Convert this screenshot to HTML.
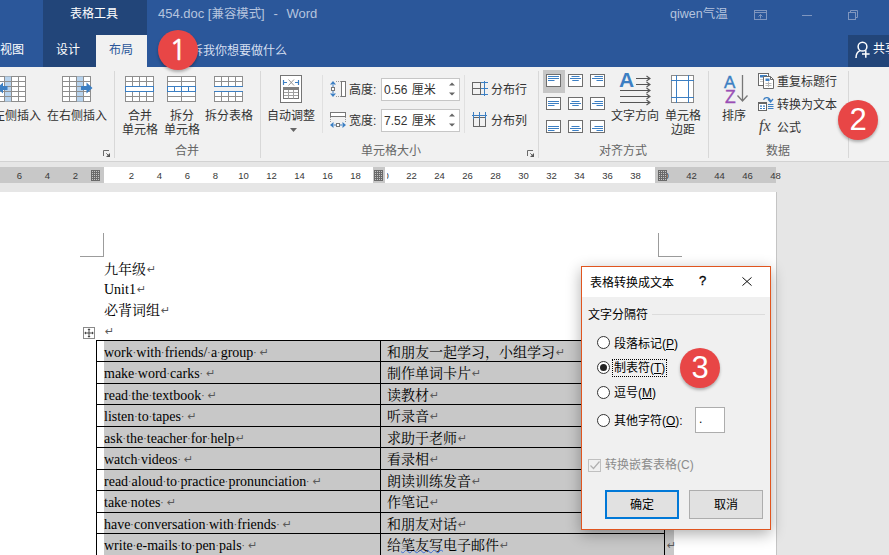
<!DOCTYPE html>
<html lang="zh-CN"><head><meta charset="utf-8"><title>Word</title>
<style>
*{margin:0;padding:0;box-sizing:border-box}
html,body{width:889px;height:555px;overflow:hidden;background:#e6e6e6}
body{position:relative;font-family:"Liberation Sans","Noto Sans CJK SC",sans-serif;font-size:12px;color:#333;font-weight:400}
.a{position:absolute;white-space:nowrap}
.t{position:absolute;white-space:nowrap;line-height:16px;height:16px}
.c{text-align:center}
svg{position:absolute;overflow:visible}
#title{left:0;top:0;width:889px;height:67px;background:#2b579a}
#ctx{left:43px;top:0;width:104px;height:67px;background:#224579}
#tab{left:96px;top:35px;width:51px;height:32px;background:#f1f1f1}
#share{left:848px;top:35px;width:41px;height:32px;background:#224579}
#ribbon{left:0;top:67px;width:889px;height:94px;background:#f1f1f1}
#ribline{left:0;top:161px;width:889px;height:1px;background:#d2d2d2}
.sep{position:absolute;width:1px;background:#d8d8d8}
.gl{color:#666}
.inp{position:absolute;background:#fff;border:1px solid #c6c6c6}
.red{position:absolute;width:40px;height:40px;border-radius:50%;background:#e84646;color:#fff;font-size:31px;line-height:39px;text-align:center;font-weight:400;box-shadow:0 2px 3px rgba(0,0,0,.28);font-family:"Liberation Sans",sans-serif}
#page{left:0;top:192px;width:777px;height:363px;background:#fff;border-right:1px solid #c4c4c4}
.doc{font-family:"Liberation Serif","Noto Serif CJK SC",serif;font-size:14px;font-weight:400;color:#000;line-height:20px;height:20px;position:absolute;white-space:nowrap}
.pm{color:#5a5a5a;font-size:11px;line-height:10px;font-family:"DejaVu Sans",sans-serif;position:relative;top:-1px;margin-left:1px}
.pm2{margin-left:3px}
.sp{display:inline-block;width:3.5px;text-align:center;font-size:10px;color:#333;position:relative;top:-1px;text-indent:-0.3px}
.wv{text-decoration:underline wavy #3f6fd6;text-decoration-thickness:1px;text-underline-offset:-1px}
.hl{position:absolute;border-top:1px solid #000;height:0}
.rn{position:absolute;top:168px;height:16px;line-height:16px;font-size:9.5px;color:#383838;width:28px;text-align:center;font-family:"Liberation Sans",sans-serif}
#dlg{left:581px;top:266px;width:190px;height:264px;background:#f0f0f0;border:1px solid #e0551f;box-shadow:0 4px 14px rgba(0,0,0,.32)}
#dlgt{left:582px;top:267px;width:188px;height:30px;background:#fff}
.dt{color:#000;font-weight:400}
.radio{position:absolute;width:13px;height:13px;border-radius:50%;border:1px solid #333;background:#fff}
.btn{position:absolute;font-weight:400;height:29px;background:#e1e1e1;color:#000;text-align:center;line-height:28px}
</style></head>
<body>
<div class="a" id="title"></div><div class="a" id="ctx"></div><div class="a" id="tab"></div><div class="a" id="share"></div>
<div class="t" style="left:70px;top:6px;color:#fff">表格工具</div>
<div class="t" style="left:158px;top:6px;color:#b5c4de;font-size:13px">454.doc [<span style="font-size:12.4px">兼容模式</span>]&nbsp; <span style="margin:0 1.5px">-</span>&nbsp; Word</div>
<div class="t" style="left:670px;top:6px;color:#b5c4de;font-size:12.5px">qiwen气温</div>
<div class="t" style="left:0px;top:42px;color:#fff">视图</div>
<div class="t" style="left:56px;top:42px;color:#fff">设计</div>
<div class="t" style="left:109px;top:42px;color:#2b579a">布局</div>
<div class="t" style="left:179px;top:43px;color:#d5dff0">告诉我你想要做什么</div>
<div class="t" style="left:873px;top:41px;color:#fff">共享</div>
<svg style="left:754px;top:10px" width="13" height="10" viewBox="0 0 13 10"><rect x="0.5" y="0.5" width="12" height="9" fill="none" stroke="#7f96bf"/><line x1="0" y1="2.5" x2="13" y2="2.5" stroke="#7f96bf"/><path d="M6.5 8.5V4.5M4.500 6.500l2-2 2 2" fill="none" stroke="#7f96bf"/></svg>
<div class="a" style="left:802px;top:15px;width:10px;height:1px;background:#7f96bf"></div>
<svg style="left:848px;top:10px" width="10" height="10" viewBox="0 0 10 10"><rect x="0.5" y="2.5" width="7" height="7" fill="none" stroke="#7f96bf"/><path d="M2.5 2.5V0.5H9.5V7.5H7.5" fill="none" stroke="#7f96bf"/></svg>
<svg style="left:855px;top:41px" width="16" height="18" viewBox="0 0 16 18"><circle cx="7.500" cy="5.700" r="4.400" fill="none" stroke="#fff" stroke-width="1.500"/><path d="M1 17c0-3.800 1.500-6.300 4-7.400" fill="none" stroke="#fff" stroke-width="1.500"/><path d="M10.800 9.300v7.500M7 13h7.600" stroke="#fff" stroke-width="1.500"/></svg>
<div class="a" id="ribbon"></div><div class="a" id="ribline"></div>
<div class="sep" style="left:114px;top:71px;height:87px"></div>
<div class="sep" style="left:260px;top:71px;height:87px"></div>
<div class="sep" style="left:538px;top:71px;height:87px"></div>
<div class="sep" style="left:708px;top:71px;height:87px"></div>
<div class="sep" style="left:848px;top:71px;height:87px"></div>
<div class="sep" style="left:322px;top:75px;height:58px;background:#e0e0e0"></div>
<div class="sep" style="left:464px;top:75px;height:58px;background:#e0e0e0"></div>
<svg style="left:-3px;top:76px" width="29" height="26" viewBox="0 0 29 26"><rect x="0.5" y="0.5" width="28" height="25" fill="#fff" stroke="#8e8e8e"/><rect x="7.5" y="0.5" width="7" height="25" fill="#b7d3ee"/><line x1="7.5" y1="0" x2="7.5" y2="26" stroke="#8e8e8e"/><line x1="14.5" y1="0" x2="14.5" y2="26" stroke="#8e8e8e"/><line x1="21.5" y1="0" x2="21.5" y2="26" stroke="#8e8e8e"/><line x1="0" y1="5.5" x2="29" y2="5.5" stroke="#8e8e8e"/><line x1="0" y1="10.5" x2="29" y2="10.5" stroke="#8e8e8e"/><line x1="0" y1="15.5" x2="29" y2="15.5" stroke="#8e8e8e"/><line x1="0" y1="20.5" x2="29" y2="20.5" stroke="#8e8e8e"/></svg>
<svg style="left:-3px;top:82px" width="11" height="12" viewBox="0 0 11 12"><path d="M0 6L6 0.5V4H10.5V8H6V11.5Z" fill="#3c7fc3"/></svg>
<svg style="left:62px;top:76px" width="29" height="26" viewBox="0 0 29 26"><rect x="0.5" y="0.5" width="28" height="25" fill="#fff" stroke="#8e8e8e"/><rect x="14.5" y="0.5" width="7" height="25" fill="#b7d3ee"/><line x1="7.5" y1="0" x2="7.5" y2="26" stroke="#8e8e8e"/><line x1="14.5" y1="0" x2="14.5" y2="26" stroke="#8e8e8e"/><line x1="21.5" y1="0" x2="21.5" y2="26" stroke="#8e8e8e"/><line x1="0" y1="5.5" x2="29" y2="5.5" stroke="#8e8e8e"/><line x1="0" y1="10.5" x2="29" y2="10.5" stroke="#8e8e8e"/><line x1="0" y1="15.5" x2="29" y2="15.5" stroke="#8e8e8e"/><line x1="0" y1="20.5" x2="29" y2="20.5" stroke="#8e8e8e"/></svg>
<svg style="left:81px;top:82px" width="12" height="12" viewBox="0 0 12 12"><path d="M11.5 6L5.5 0.5V4H0V8H5.5V11.5Z" fill="#3c7fc3"/></svg>
<div class="t" style="left:-19px;top:108px">在左侧插入</div>
<div class="t" style="left:47px;top:108px">在右侧插入</div>
<svg style="left:103px;top:150px" width="7" height="7" viewBox="0 0 7 7"><path d="M0.500 6V0.500H6" fill="none" stroke="#6a6a6a"/><path d="M7 3v4H3z" fill="#555"/><path d="M3.300 3.300L5.500 5.500" stroke="#666"/></svg>
<svg style="left:125px;top:76px" width="29" height="26" viewBox="0 0 29 26"><rect x="0.5" y="0.5" width="28" height="25" fill="#fff" stroke="#8e8e8e"/><line x1="7.5" y1="0" x2="7.5" y2="26" stroke="#8e8e8e"/><line x1="14.5" y1="0" x2="14.5" y2="26" stroke="#8e8e8e"/><line x1="21.5" y1="0" x2="21.5" y2="26" stroke="#8e8e8e"/><line x1="0" y1="5.5" x2="29" y2="5.5" stroke="#8e8e8e"/><line x1="0" y1="10.5" x2="29" y2="10.5" stroke="#8e8e8e"/><line x1="0" y1="15.5" x2="29" y2="15.5" stroke="#8e8e8e"/><line x1="0" y1="20.5" x2="29" y2="20.5" stroke="#8e8e8e"/></svg><svg style="left:125px;top:76px" width="29" height="26"><rect x="0.5" y="10.5" width="28" height="5" fill="#fff" stroke="#3c7fc3"/></svg>
<div class="t c" style="left:110px;width:60px;top:108px">合并</div><div class="t c" style="left:110px;width:60px;top:122px">单元格</div>
<svg style="left:167px;top:76px" width="29" height="26" viewBox="0 0 29 26"><rect x="0.5" y="0.5" width="28" height="25" fill="#fff" stroke="#8e8e8e"/><line x1="14.5" y1="0" x2="14.5" y2="26" stroke="#8e8e8e"/><line x1="0" y1="5.5" x2="29" y2="5.5" stroke="#8e8e8e"/><line x1="0" y1="10.5" x2="29" y2="10.5" stroke="#8e8e8e"/><line x1="0" y1="15.5" x2="29" y2="15.5" stroke="#8e8e8e"/><line x1="0" y1="20.5" x2="29" y2="20.5" stroke="#8e8e8e"/></svg><svg style="left:167px;top:76px" width="29" height="26"><rect x="0.5" y="10.5" width="28" height="5" fill="#fff" stroke="#3c7fc3"/><path d="M7.5 10.5v5M14.5 10.5v5M21.5 10.5v5" stroke="#3c7fc3"/></svg>
<div class="t c" style="left:152px;width:60px;top:108px">拆分</div><div class="t c" style="left:152px;width:60px;top:122px">单元格</div>
<svg style="left:214px;top:76px" width="29" height="11" viewBox="0 0 29 11"><rect x="0.5" y="0.5" width="28" height="10" fill="#fff" stroke="#8e8e8e"/><line x1="7.5" y1="0" x2="7.5" y2="11" stroke="#8e8e8e"/><line x1="14.5" y1="0" x2="14.5" y2="11" stroke="#8e8e8e"/><line x1="21.5" y1="0" x2="21.5" y2="11" stroke="#8e8e8e"/><line x1="0" y1="5.5" x2="29" y2="5.5" stroke="#8e8e8e"/></svg><svg style="left:214px;top:91px" width="29" height="11" viewBox="0 0 29 11"><rect x="0.5" y="0.5" width="28" height="10" fill="#fff" stroke="#8e8e8e"/><line x1="7.5" y1="0" x2="7.5" y2="11" stroke="#8e8e8e"/><line x1="14.5" y1="0" x2="14.5" y2="11" stroke="#8e8e8e"/><line x1="21.5" y1="0" x2="21.5" y2="11" stroke="#8e8e8e"/><line x1="0" y1="5.5" x2="29" y2="5.5" stroke="#8e8e8e"/></svg>
<div class="a" style="left:214px;top:86px;width:29px;height:1px;background:#3c7fc3"></div><div class="a" style="left:214px;top:91px;width:29px;height:1px;background:#3c7fc3"></div>
<div class="t" style="left:205px;top:108px">拆分表格</div>
<div class="t gl" style="left:175px;top:143px">合并</div>
<svg style="left:280px;top:75px" width="22" height="28" viewBox="0 0 22 28"><rect x="0.5" y="0.5" width="21" height="27" fill="#fff" stroke="#757575"/>
<path d="M3.5 5v5M18.5 5v5M3.5 7.5h3.5M15 7.5h3.5" stroke="#3c7fc3" stroke-width="1.200" fill="none"/><path d="M8.500 4.500l5.500 6M14 4.500l-5.500 6" stroke="#8a8a8a" stroke-width=".9"/>
<rect x="3.5" y="12.5" width="15" height="11" fill="#fff" stroke="#777"/><rect x="3" y="12" width="16" height="3" fill="#808080"/>
<path d="M8.5 15v8.500M13.5 15v8.500M4 17.500h14M4 20.500h14" stroke="#a0a0a0" fill="none"/></svg>
<div class="t" style="left:267px;top:108px">自动调整</div>
<svg style="left:290px;top:128px" width="7" height="4" viewBox="0 0 7 4"><path d="M0 0h7L3.5 4z" fill="#666"/></svg>
<svg style="left:330px;top:81px" width="17" height="16" viewBox="0 0 17 16"><rect x="11.5" y="0.5" width="4" height="15" fill="#fff" stroke="#777"/>
<path d="M3 0L0 3.5H6Z M3 16L0 12.5H6Z" fill="#3c7fc3"/><rect x="1.5" y="6.5" width="3" height="3" fill="#fff" stroke="#777"/><path d="M3 4v2M3 10v2" stroke="#3c7fc3"/>
<path d="M6 0.5h5M6 15.5h5" stroke="#999" stroke-dasharray="1 1"/></svg>
<svg style="left:330px;top:112px" width="17" height="16" viewBox="0 0 17 16"><rect x="0.5" y="0.5" width="15" height="4" fill="#fff" stroke="#777"/>
<path d="M0 13L3.5 10V16Z M16 13L12.5 10V16Z" fill="#3c7fc3"/><rect x="6.5" y="11.5" width="3" height="3" fill="#fff" stroke="#777"/><path d="M4 13h2M10 13h2" stroke="#3c7fc3"/>
<path d="M0.5 5v5M15.5 5v5" stroke="#999" stroke-dasharray="1 1"/></svg>
<div class="t" style="left:349px;top:82px">高度:</div><div class="t" style="left:349px;top:113px">宽度:</div>
<div class="inp" style="left:381px;top:78px;width:79px;height:23px"></div><div class="inp" style="left:381px;top:109px;width:79px;height:23px"></div>
<div class="t" style="left:384px;top:82px;word-spacing:1px">0.56 厘米</div><div class="t" style="left:384px;top:113px;word-spacing:1px">7.52 厘米</div>
<svg style="left:449px;top:82px" width="6" height="14" viewBox="0 0 6 14"><path d="M0 3.5L3 0.5L6 3.5Z M0 10.5L3 13.5L6 10.5Z" fill="#666"/></svg>
<svg style="left:449px;top:113px" width="6" height="14" viewBox="0 0 6 14"><path d="M0 3.5L3 0.5L6 3.5Z M0 10.5L3 13.5L6 10.5Z" fill="#666"/></svg>
<svg style="left:472px;top:81px" width="16" height="15" viewBox="0 0 16 15"><rect x="0.5" y="1.5" width="8" height="12" fill="none" stroke="#666"/><path d="M0 7.5h9" stroke="#666"/><path d="M12.5 0v15M9 1.500h7M9 7.500h7M9 13.500h7" stroke="#3c7fc3" fill="none"/></svg>
<svg style="left:472px;top:112px" width="15" height="15" viewBox="0 0 15 15"><rect x="1.500" y="5.500" width="12" height="9" fill="none" stroke="#666"/><path d="M7.500 5v10" stroke="#666"/><path d="M0 3.500h15M1.500 0v7M7.500 0v7M13.500 0v7" stroke="#3c7fc3" fill="none"/></svg>
<div class="t" style="left:491px;top:82px">分布行</div><div class="t" style="left:491px;top:113px">分布列</div>
<div class="t gl" style="left:361px;top:143px">单元格大小</div>
<svg style="left:527px;top:150px" width="7" height="7" viewBox="0 0 7 7"><path d="M0.500 6V0.500H6" fill="none" stroke="#6a6a6a"/><path d="M7 3v4H3z" fill="#555"/><path d="M3.300 3.300L5.500 5.500" stroke="#666"/></svg>
<div class="a" style="left:543px;top:70px;width:22px;height:23px;background:#c6c6c6"></div>
<svg style="left:546px;top:74px" width="15" height="13" viewBox="0 0 15 13"><rect x="0.500" y="0.500" width="14" height="12" fill="#fff" stroke="#6e6e6e"/><line x1="2" y1="2.5" x2="13" y2="2.5" stroke="#3c7fc3"/><line x1="2" y1="4.5" x2="13" y2="4.5" stroke="#3c7fc3"/><line x1="2" y1="6.5" x2="8.5" y2="6.5" stroke="#3c7fc3"/></svg>
<svg style="left:568px;top:74px" width="15" height="13" viewBox="0 0 15 13"><rect x="0.500" y="0.500" width="14" height="12" fill="#fff" stroke="#6e6e6e"/><line x1="3.5" y1="2.5" x2="11.5" y2="2.5" stroke="#3c7fc3"/><line x1="2.0" y1="4.5" x2="13.0" y2="4.5" stroke="#3c7fc3"/><line x1="4.25" y1="6.5" x2="10.75" y2="6.5" stroke="#3c7fc3"/></svg>
<svg style="left:590px;top:74px" width="15" height="13" viewBox="0 0 15 13"><rect x="0.500" y="0.500" width="14" height="12" fill="#fff" stroke="#6e6e6e"/><line x1="4.5" y1="2.5" x2="13.0" y2="2.5" stroke="#3c7fc3"/><line x1="2" y1="4.5" x2="13" y2="4.5" stroke="#3c7fc3"/><line x1="6.5" y1="6.5" x2="13.0" y2="6.5" stroke="#3c7fc3"/></svg>
<svg style="left:546px;top:97px" width="15" height="13" viewBox="0 0 15 13"><rect x="0.500" y="0.500" width="14" height="12" fill="#fff" stroke="#6e6e6e"/><line x1="2" y1="4.5" x2="13" y2="4.5" stroke="#3c7fc3"/><line x1="2" y1="6.5" x2="13" y2="6.5" stroke="#3c7fc3"/><line x1="2" y1="8.5" x2="8.5" y2="8.5" stroke="#3c7fc3"/></svg>
<svg style="left:568px;top:97px" width="15" height="13" viewBox="0 0 15 13"><rect x="0.500" y="0.500" width="14" height="12" fill="#fff" stroke="#6e6e6e"/><line x1="3.5" y1="4.5" x2="11.5" y2="4.5" stroke="#3c7fc3"/><line x1="2.0" y1="6.5" x2="13.0" y2="6.5" stroke="#3c7fc3"/><line x1="4.25" y1="8.5" x2="10.75" y2="8.5" stroke="#3c7fc3"/></svg>
<svg style="left:590px;top:97px" width="15" height="13" viewBox="0 0 15 13"><rect x="0.500" y="0.500" width="14" height="12" fill="#fff" stroke="#6e6e6e"/><line x1="4.5" y1="4.5" x2="13.0" y2="4.5" stroke="#3c7fc3"/><line x1="2" y1="6.5" x2="13" y2="6.5" stroke="#3c7fc3"/><line x1="6.5" y1="8.5" x2="13.0" y2="8.5" stroke="#3c7fc3"/></svg>
<svg style="left:546px;top:120px" width="15" height="13" viewBox="0 0 15 13"><rect x="0.500" y="0.500" width="14" height="12" fill="#fff" stroke="#6e6e6e"/><line x1="2" y1="6.5" x2="13" y2="6.5" stroke="#3c7fc3"/><line x1="2" y1="8.5" x2="13" y2="8.5" stroke="#3c7fc3"/><line x1="2" y1="10.5" x2="8.5" y2="10.5" stroke="#3c7fc3"/></svg>
<svg style="left:568px;top:120px" width="15" height="13" viewBox="0 0 15 13"><rect x="0.500" y="0.500" width="14" height="12" fill="#fff" stroke="#6e6e6e"/><line x1="3.5" y1="6.5" x2="11.5" y2="6.5" stroke="#3c7fc3"/><line x1="2.0" y1="8.5" x2="13.0" y2="8.5" stroke="#3c7fc3"/><line x1="4.25" y1="10.5" x2="10.75" y2="10.5" stroke="#3c7fc3"/></svg>
<svg style="left:590px;top:120px" width="15" height="13" viewBox="0 0 15 13"><rect x="0.500" y="0.500" width="14" height="12" fill="#fff" stroke="#6e6e6e"/><line x1="4.5" y1="6.5" x2="13.0" y2="6.5" stroke="#3c7fc3"/><line x1="2" y1="8.5" x2="13" y2="8.5" stroke="#3c7fc3"/><line x1="6.5" y1="10.5" x2="13.0" y2="10.5" stroke="#3c7fc3"/></svg>
<div class="a" style="left:619px;top:69px;font:bold 21px/21px 'Liberation Sans',sans-serif;color:#3c7fc3">A</div>
<svg style="left:619px;top:74px" width="32" height="32" viewBox="0 0 32 32"><path d="M17 4.5H31M27.5 2.0l3.500 2.500l-3.500 2.500" fill="none" stroke="#555" stroke-width="1.100"/><path d="M17 10.5H31M27.5 8.0l3.500 2.500l-3.500 2.500" fill="none" stroke="#555" stroke-width="1.100"/><path d="M1 16.5H31M27.5 14.0l3.500 2.500l-3.500 2.500" fill="none" stroke="#555" stroke-width="1.100"/><path d="M1 22.5H31M27.5 20.0l3.500 2.500l-3.500 2.500" fill="none" stroke="#555" stroke-width="1.100"/><path d="M1 28.5H31M27.5 26.0l3.500 2.500l-3.500 2.500" fill="none" stroke="#555" stroke-width="1.100"/></svg>
<div class="t" style="left:611px;top:108px">文字方向</div>
<svg style="left:671px;top:75px" width="23" height="28" viewBox="0 0 23 28"><rect x="0.500" y="0.500" width="22" height="27" fill="#fff" stroke="#8a8a8a"/><path d="M5.500 0v28M17.500 0v28M0 5.500h23M0 22.500h23" stroke="#3c7fc3" fill="none"/></svg>
<div class="t c" style="left:653px;width:60px;top:108px">单元格</div><div class="t c" style="left:653px;width:60px;top:122px">边距</div>
<div class="t gl" style="left:599px;top:143px">对齐方式</div>
<div class="a" style="left:724px;top:74px;font:17px/17px 'Liberation Sans',sans-serif;-webkit-text-stroke:.4px #3c7fc3;color:#3c7fc3">A</div>
<div class="a" style="left:725px;top:89px;font:17.5px/17px 'Liberation Sans',sans-serif;-webkit-text-stroke:.4px #9a4fb5;color:#9a4fb5">Z</div>
<svg style="left:737px;top:75px" width="11" height="27" viewBox="0 0 11 27"><path d="M5.500 0v26M0.500 20.500l5 5.500l5-5.500" fill="none" stroke="#777" stroke-width="1.300"/></svg>
<div class="t" style="left:722px;top:108px">排序</div>
<svg style="left:758px;top:73px" width="16" height="16" viewBox="0 0 16 16"><rect x="0.5" y="0.5" width="10" height="12" fill="#fff" stroke="#6a6a6a"/><rect x="2" y="2" width="7" height="2.500" fill="#3c7fc3"/><path d="M2 6.500h7M2 8.500h7M5.500 5v5" stroke="#c8c8c8" fill="none"/>
<path d="M5.500 3.500h7l3 3v9h-10z" fill="#fff" stroke="#6a6a6a"/><path d="M12.500 3.500v3h3" fill="none" stroke="#6a6a6a"/><rect x="7.500" y="5.500" width="4" height="2.500" fill="#3c7fc3"/><path d="M7.500 10.500h6M7.500 12.500h6M10.500 8.500v5.500" stroke="#b8b8b8" fill="none"/></svg>
<svg style="left:758px;top:96px" width="16" height="15" viewBox="0 0 16 15"><rect x="0.500" y="6.500" width="8" height="8" fill="#fff" stroke="#666"/><rect x="0" y="6" width="9" height="2" fill="#666"/><path d="M2 10.200h2M5 10.200h2M2 12.500h2M5 12.500h2" stroke="#3c7fc3" stroke-width="1.200"/><path d="M10 8.500h5.500M10 10.500h5.500M10 12.500h5.500" stroke="#3c7fc3"/><path d="M5.500 3.800C7 0.800 11 0.800 12.500 5M10 3.300l2.600 2.700l2.400-3" fill="none" stroke="#3c7fc3" stroke-width="1.300"/></svg>
<div class="a" style="left:759px;top:117px;font:italic 16px/18px 'Liberation Serif',serif;color:#444">fx</div>
<div class="t" style="left:777px;top:74px">重复标题行</div><div class="t" style="left:777px;top:97px">转换为文本</div><div class="t" style="left:777px;top:120px">公式</div>
<div class="t gl" style="left:766px;top:143px">数据</div>
<div class="a" style="left:0;top:167px;width:776px;height:16px;background:#c8c8c8"></div>
<div class="a" style="left:104px;top:167px;width:551px;height:16px;background:#fff"></div>
<div class="rn" style="left:5.5px">6</div>
<div class="rn" style="left:33.5px">4</div>
<div class="rn" style="left:61.5px">2</div>
<div class="rn" style="left:117.5px">2</div>
<div class="rn" style="left:145.5px">4</div>
<div class="rn" style="left:173.5px">6</div>
<div class="rn" style="left:201.5px">8</div>
<div class="rn" style="left:229.5px">10</div>
<div class="rn" style="left:257.5px">12</div>
<div class="rn" style="left:285.5px">14</div>
<div class="rn" style="left:313.5px">16</div>
<div class="rn" style="left:341.5px">18</div>
<div class="rn" style="left:369.5px">20</div>
<div class="rn" style="left:397.5px">22</div>
<div class="rn" style="left:425.5px">24</div>
<div class="rn" style="left:453.5px">26</div>
<div class="rn" style="left:481.5px">28</div>
<div class="rn" style="left:509.5px">30</div>
<div class="rn" style="left:537.5px">32</div>
<div class="rn" style="left:565.5px">34</div>
<div class="rn" style="left:593.5px">36</div>
<div class="rn" style="left:621.5px">38</div>
<div class="rn" style="left:649.5px">40</div>
<div class="rn" style="left:677.5px">42</div>
<div class="rn" style="left:705.5px">44</div>
<div class="rn" style="left:733.5px">46</div>
<div class="rn" style="left:761.5px">48</div>
<div class="a" style="left:373px;top:167px;width:12px;height:16px;background:#c8c8c8"></div><div class="a" style="left:385px;top:167px;width:2px;height:16px;background:#fff"></div>
<svg style="left:91px;top:170px" width="9" height="11" viewBox="0 0 9 11"><rect width="9" height="11" fill="#c4c4c4"/><line x1="0.5" y1="0" x2="0.5" y2="11" stroke="#6a6a6a" stroke-width="1"/><line x1="2.5" y1="0" x2="2.5" y2="11" stroke="#6a6a6a" stroke-width="1"/><line x1="4.5" y1="0" x2="4.5" y2="11" stroke="#6a6a6a" stroke-width="1"/><line x1="6.5" y1="0" x2="6.5" y2="11" stroke="#6a6a6a" stroke-width="1"/><line x1="8.5" y1="0" x2="8.5" y2="11" stroke="#6a6a6a" stroke-width="1"/><line x1="0" y1="0.5" x2="9" y2="0.5" stroke="#6a6a6a" stroke-width="1"/><line x1="0" y1="2.5" x2="9" y2="2.5" stroke="#6a6a6a" stroke-width="1"/><line x1="0" y1="4.5" x2="9" y2="4.5" stroke="#6a6a6a" stroke-width="1"/><line x1="0" y1="6.5" x2="9" y2="6.5" stroke="#6a6a6a" stroke-width="1"/><line x1="0" y1="8.5" x2="9" y2="8.5" stroke="#6a6a6a" stroke-width="1"/><line x1="0" y1="10.5" x2="9" y2="10.5" stroke="#6a6a6a" stroke-width="1"/></svg><svg style="left:374px;top:170px" width="9" height="11" viewBox="0 0 9 11"><rect width="9" height="11" fill="#c4c4c4"/><line x1="0.5" y1="0" x2="0.5" y2="11" stroke="#6a6a6a" stroke-width="1"/><line x1="2.5" y1="0" x2="2.5" y2="11" stroke="#6a6a6a" stroke-width="1"/><line x1="4.5" y1="0" x2="4.5" y2="11" stroke="#6a6a6a" stroke-width="1"/><line x1="6.5" y1="0" x2="6.5" y2="11" stroke="#6a6a6a" stroke-width="1"/><line x1="8.5" y1="0" x2="8.5" y2="11" stroke="#6a6a6a" stroke-width="1"/><line x1="0" y1="0.5" x2="9" y2="0.5" stroke="#6a6a6a" stroke-width="1"/><line x1="0" y1="2.5" x2="9" y2="2.5" stroke="#6a6a6a" stroke-width="1"/><line x1="0" y1="4.5" x2="9" y2="4.5" stroke="#6a6a6a" stroke-width="1"/><line x1="0" y1="6.5" x2="9" y2="6.5" stroke="#6a6a6a" stroke-width="1"/><line x1="0" y1="8.5" x2="9" y2="8.5" stroke="#6a6a6a" stroke-width="1"/><line x1="0" y1="10.5" x2="9" y2="10.5" stroke="#6a6a6a" stroke-width="1"/></svg><svg style="left:658px;top:170px" width="9" height="11" viewBox="0 0 9 11"><rect width="9" height="11" fill="#c4c4c4"/><line x1="0.5" y1="0" x2="0.5" y2="11" stroke="#6a6a6a" stroke-width="1"/><line x1="2.5" y1="0" x2="2.5" y2="11" stroke="#6a6a6a" stroke-width="1"/><line x1="4.5" y1="0" x2="4.5" y2="11" stroke="#6a6a6a" stroke-width="1"/><line x1="6.5" y1="0" x2="6.5" y2="11" stroke="#6a6a6a" stroke-width="1"/><line x1="8.5" y1="0" x2="8.5" y2="11" stroke="#6a6a6a" stroke-width="1"/><line x1="0" y1="0.5" x2="9" y2="0.5" stroke="#6a6a6a" stroke-width="1"/><line x1="0" y1="2.5" x2="9" y2="2.5" stroke="#6a6a6a" stroke-width="1"/><line x1="0" y1="4.5" x2="9" y2="4.5" stroke="#6a6a6a" stroke-width="1"/><line x1="0" y1="6.5" x2="9" y2="6.5" stroke="#6a6a6a" stroke-width="1"/><line x1="0" y1="8.5" x2="9" y2="8.5" stroke="#6a6a6a" stroke-width="1"/><line x1="0" y1="10.5" x2="9" y2="10.5" stroke="#6a6a6a" stroke-width="1"/></svg>
<div class="a" id="page"></div>
<div class="a" style="left:103px;top:233px;width:1px;height:24px;background:#9c9c9c"></div><div class="a" style="left:80px;top:256px;width:24px;height:1px;background:#9c9c9c"></div>
<div class="a" style="left:658px;top:233px;width:1px;height:24px;background:#9c9c9c"></div><div class="a" style="left:658px;top:256px;width:24px;height:1px;background:#9c9c9c"></div>
<div class="doc" style="left:104px;top:260px">九年级<span class="pm">↵</span></div>
<div class="doc" style="left:104px;top:280px">Unit1<span class="pm">↵</span></div>
<div class="doc" style="left:104px;top:301px">必背词组<span class="pm">↵</span></div>
<div class="doc" style="left:104px;top:322px"><span class="pm">↵</span></div>
<svg style="left:83px;top:327px" width="12" height="12" viewBox="0 0 12 12"><rect x="0.500" y="0.500" width="11" height="11" fill="#fff" stroke="#8a8a8a"/><path d="M6 2v8M2 6h8" stroke="#444"/><path d="M6 1.200L4.500 3h3zM6 10.800L4.500 9h3zM1.200 6L3 4.500v3zM10.800 6L9 4.500v3z" fill="#444"/></svg>
<div class="a" style="left:104px;top:341px;width:570px;height:214px;background:#c8c8c8"></div>
<div class="a" style="left:96px;top:340px;width:1px;height:215px;background:#000"></div>
<div class="a" style="left:380px;top:340px;width:1px;height:215px;background:#000"></div>
<div class="a" style="left:664px;top:340px;width:1px;height:215px;background:#000"></div>
<div class="a" style="left:96px;top:340px;width:569px;height:1px;background:#000"></div>
<div class="a" style="left:96px;top:361px;width:569px;height:1px;background:#000"></div>
<div class="a" style="left:96px;top:383px;width:569px;height:1px;background:#000"></div>
<div class="a" style="left:96px;top:404px;width:569px;height:1px;background:#000"></div>
<div class="a" style="left:96px;top:426px;width:569px;height:1px;background:#000"></div>
<div class="a" style="left:96px;top:447px;width:569px;height:1px;background:#000"></div>
<div class="a" style="left:96px;top:469px;width:569px;height:1px;background:#000"></div>
<div class="a" style="left:96px;top:490px;width:569px;height:1px;background:#000"></div>
<div class="a" style="left:96px;top:512px;width:569px;height:1px;background:#000"></div>
<div class="a" style="left:96px;top:533px;width:569px;height:1px;background:#000"></div>
<div class="a" style="left:96px;top:555px;width:569px;height:1px;background:#000"></div>
<div class="doc" style="left:104px;top:343px"><span class="en">work<span class="sp">·</span>with<span class="sp">·</span>friends/<span class="sp">·</span>a<span class="sp">·</span>group<span class="sp">·</span></span><span class="pm pm2">↵</span></div>
<div class="doc" style="left:387px;top:343px">和朋友一起学习，小组学习<span class="pm">↵</span></div>
<div class="doc" style="left:666px;top:343px"><span class="pm">↵</span></div>
<div class="doc" style="left:104px;top:364px"><span class="en">make<span class="sp">·</span>word<span class="sp">·</span>carks<span class="sp">·</span></span><span class="pm pm2">↵</span></div>
<div class="doc" style="left:387px;top:364px">制作单词卡片<span class="pm">↵</span></div>
<div class="doc" style="left:666px;top:364px"><span class="pm">↵</span></div>
<div class="doc" style="left:104px;top:386px"><span class="en">read<span class="sp">·</span>the<span class="sp">·</span>textbook<span class="sp">·</span></span><span class="pm pm2">↵</span></div>
<div class="doc" style="left:387px;top:386px">读教材<span class="pm">↵</span></div>
<div class="doc" style="left:666px;top:386px"><span class="pm">↵</span></div>
<div class="doc" style="left:104px;top:407px"><span class="en">listen<span class="sp">·</span>to<span class="sp">·</span>tapes<span class="sp">·</span></span><span class="pm pm2">↵</span></div>
<div class="doc" style="left:387px;top:407px">听录音<span class="pm">↵</span></div>
<div class="doc" style="left:666px;top:407px"><span class="pm">↵</span></div>
<div class="doc" style="left:104px;top:429px"><span class="en">ask<span class="sp">·</span>the<span class="sp">·</span>teacher<span class="sp">·</span>for<span class="sp">·</span>help</span><span class="pm">↵</span></div>
<div class="doc" style="left:387px;top:429px">求助于老师<span class="pm">↵</span></div>
<div class="doc" style="left:666px;top:429px"><span class="pm">↵</span></div>
<div class="doc" style="left:104px;top:450px"><span class="en">watch<span class="sp">·</span>videos<span class="sp">·</span></span><span class="pm pm2">↵</span></div>
<div class="doc" style="left:387px;top:450px">看录相<span class="pm">↵</span></div>
<div class="doc" style="left:666px;top:450px"><span class="pm">↵</span></div>
<div class="doc" style="left:104px;top:472px"><span class="en">read<span class="sp">·</span>aloud<span class="sp">·</span>to<span class="sp">·</span>practice<span class="sp">·</span>pronunciation<span class="sp">·</span></span><span class="pm pm2">↵</span></div>
<div class="doc" style="left:387px;top:472px">朗读训练发音<span class="pm">↵</span></div>
<div class="doc" style="left:666px;top:472px"><span class="pm">↵</span></div>
<div class="doc" style="left:104px;top:493px"><span class="en">take<span class="sp">·</span>notes<span class="sp">·</span></span><span class="pm pm2">↵</span></div>
<div class="doc" style="left:387px;top:493px">作笔记<span class="pm">↵</span></div>
<div class="doc" style="left:666px;top:493px"><span class="pm">↵</span></div>
<div class="doc" style="left:104px;top:515px"><span class="en">have<span class="sp">·</span>conversation<span class="sp">·</span>with<span class="sp">·</span>friends<span class="sp">·</span></span><span class="pm pm2">↵</span></div>
<div class="doc" style="left:387px;top:515px">和朋友对话<span class="pm">↵</span></div>
<div class="doc" style="left:666px;top:515px"><span class="pm">↵</span></div>
<div class="doc" style="left:104px;top:536px"><span class="en">write<span class="sp">·</span>e-mails<span class="sp">·</span>to<span class="sp">·</span>pen<span class="sp">·</span>pals<span class="sp">·</span></span><span class="pm pm2">↵</span></div>
<div class="doc" style="left:387px;top:536px">给<span class="wv">笔友写</span>电子邮件<span class="pm">↵</span></div>
<div class="doc" style="left:666px;top:536px"><span class="pm">↵</span></div>
<div class="a" id="dlg"></div><div class="a" id="dlgt"></div>
<div class="t dt" style="left:590px;top:275px">表格转换成文本</div>
<div class="t dt" style="left:699px;top:273px;font-size:13px;-webkit-text-stroke:.3px #000">?</div>
<svg style="left:742px;top:277px" width="10" height="9" viewBox="0 0 11 11" preserveAspectRatio="none"><path d="M0.500 0.500l10 10M10.500 0.500l-10 10" stroke="#000" stroke-width="1.100"/></svg>
<div class="t dt" style="left:588px;top:307px">文字分隔符</div>
<div class="a" style="left:652px;top:314px;width:113px;height:1px;background:#dcdcdc"></div>
<div class="radio" style="left:597px;top:336px"></div>
<div class="t dt" style="left:614px;top:336px">段落标记(<u>P</u>)</div>
<div class="radio" style="left:597px;top:361px"></div>
<div class="t dt" style="left:614px;top:360px">制表符(<u>T</u>)</div>
<div class="radio" style="left:597px;top:386px"></div>
<div class="t dt" style="left:614px;top:385px">逗号(<u>M</u>)</div>
<div class="radio" style="left:597px;top:414px"></div>
<div class="t dt" style="left:614px;top:413px">其他字符(<u>O</u>):</div>
<div class="a" style="left:600px;top:364px;width:7px;height:7px;border-radius:50%;background:#222"></div>
<div class="a" style="left:612px;top:359px;width:55px;height:18px;border:1px dotted #000"></div>
<div class="inp" style="left:695px;top:407px;width:30px;height:26px;border-color:#adadad"></div><div class="t dt" style="left:699px;top:411px">.</div>
<div class="a" style="left:588px;top:459px;width:13px;height:13px;border:1px solid #c0c0c0;background:#f0f0f0"></div>
<svg style="left:590px;top:461px" width="10" height="9" viewBox="0 0 10 9"><path d="M0.500 4.500l3 3l6-7" fill="none" stroke="#b0b0b0" stroke-width="1.200"/></svg>
<div class="t" style="left:605px;top:457px;color:#8c8c8c">转换嵌套表格(C)</div>
<div class="btn" style="left:605px;top:490px;width:74px;border:2px solid #0078d7;line-height:26px">确定</div>
<div class="btn" style="left:689px;top:490px;width:74px;border:1px solid #adadad">取消</div>
<div class="red" style="left:158px;top:30px;font-family:NanumGothic,'Liberation Sans',sans-serif;font-size:29px;line-height:40px;-webkit-text-stroke:0.5px #fff">1</div>
<div class="red" style="left:838px;top:100px">2</div>
<div class="red" style="left:680px;top:348px">3</div>
</body></html>
